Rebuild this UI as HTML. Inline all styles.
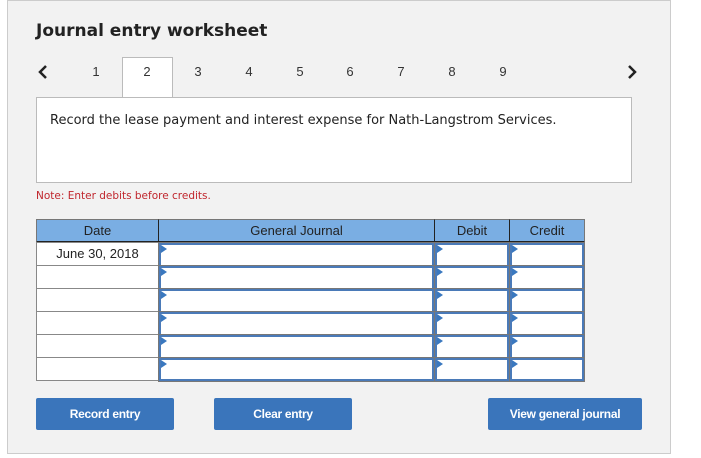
<!DOCTYPE html>
<html><head><meta charset="utf-8"><style>
*{margin:0;padding:0;box-sizing:border-box}
body{width:701px;height:458px;background:#fff;position:relative;overflow:hidden;font-family:"Liberation Sans",Arial,sans-serif}
.a{position:absolute}
.panel{left:7px;top:0;width:664px;height:454px;background:#f2f2f2;border:1px solid #ccc}
.title{left:36px;top:21px;font:bold 17px "DejaVu Sans",Verdana,sans-serif;color:#222}
.num{top:64px;width:20px;margin-left:-10px;text-align:center;font-size:13px;color:#333}
.tab{left:122px;top:57px;width:51px;height:41px;background:#fff;border:1px solid #bbb;border-bottom:none}
.box{left:36px;top:97px;width:596px;height:86px;background:#fff;border:1px solid #bbb}
.box span{position:absolute;left:13px;top:15px;font:13px "DejaVu Sans",Verdana,sans-serif;color:#222;white-space:nowrap}
.note{left:36px;top:190px;font:10.5px "DejaVu Sans",Verdana,sans-serif;color:#c0262d}
.hd{top:219px;height:24px;background:#7aaee3;border:1px solid #777;border-bottom:2px solid #222;font-size:13px;color:#222;text-align:center;line-height:21px}
.dc{left:36px;width:123px;height:24px;background:#fff;border:1px solid #888;font-size:13px;color:#222;text-align:center;line-height:22px}
.in{height:24px;background:#fff;border:2px solid #4a7ab8;outline:1px solid #777}
.in:before{content:"";position:absolute;left:0;top:0;border-left:6px solid #3a78bf;border-top:4px solid transparent;border-bottom:4px solid transparent}
.btn{top:398px;height:32px;background:#3a75bb;color:#fff;font-weight:bold;font-size:12px;text-align:center;line-height:32px;border-radius:2px;letter-spacing:-0.3px}
</style></head><body>
<div class="a panel"></div>
<div class="a title">Journal entry worksheet</div>
<div class="a tab"></div>
<svg class="a" style="left:37px;top:64px" width="12" height="16"><path d="M9 2 L3 8 L9 14" fill="none" stroke="#222" stroke-width="2.5"/></svg>
<svg class="a" style="left:626px;top:64px" width="12" height="16"><path d="M3 2 L9 8 L3 14" fill="none" stroke="#222" stroke-width="2.5"/></svg>
<div class="a num" style="left:96px">1</div>
<div class="a num" style="left:147px">2</div>
<div class="a num" style="left:198px">3</div>
<div class="a num" style="left:249px">4</div>
<div class="a num" style="left:300px">5</div>
<div class="a num" style="left:350px">6</div>
<div class="a num" style="left:401px">7</div>
<div class="a num" style="left:452px">8</div>
<div class="a num" style="left:503px">9</div>
<div class="a box"><span>Record the lease payment and interest expense for Nath-Langstrom Services.</span></div>
<div class="a note">Note: Enter debits before credits.</div>
<div class="a hd" style="left:36px;width:123px">Date</div>
<div class="a hd" style="left:158px;width:277px;border-left-color:#222">General Journal</div>
<div class="a hd" style="left:434px;width:76px;border-left-color:#222">Debit</div>
<div class="a hd" style="left:509px;width:76px;border-left-color:#222">Credit</div>

<div class="a dc" style="top:242px">June 30, 2018</div>
<div class="a dc" style="top:265px"></div>
<div class="a dc" style="top:288px"></div>
<div class="a dc" style="top:311px"></div>
<div class="a dc" style="top:334px"></div>
<div class="a dc" style="top:357px"></div>

<div class="a in" style="left:159px;top:243px;width:275px"></div>
<div class="a in" style="left:435px;top:243px;width:74px"></div>
<div class="a in" style="left:510px;top:243px;width:74px"></div>
<div class="a in" style="left:159px;top:266px;width:275px"></div>
<div class="a in" style="left:435px;top:266px;width:74px"></div>
<div class="a in" style="left:510px;top:266px;width:74px"></div>
<div class="a in" style="left:159px;top:289px;width:275px"></div>
<div class="a in" style="left:435px;top:289px;width:74px"></div>
<div class="a in" style="left:510px;top:289px;width:74px"></div>
<div class="a in" style="left:159px;top:312px;width:275px"></div>
<div class="a in" style="left:435px;top:312px;width:74px"></div>
<div class="a in" style="left:510px;top:312px;width:74px"></div>
<div class="a in" style="left:159px;top:335px;width:275px"></div>
<div class="a in" style="left:435px;top:335px;width:74px"></div>
<div class="a in" style="left:510px;top:335px;width:74px"></div>
<div class="a in" style="left:159px;top:358px;width:275px;height:23px"></div>
<div class="a in" style="left:435px;top:358px;width:74px;height:23px"></div>
<div class="a in" style="left:510px;top:358px;width:74px;height:23px"></div>

<div class="a btn" style="left:36px;width:138px">Record entry</div>
<div class="a btn" style="left:214px;width:138px">Clear entry</div>
<div class="a btn" style="left:488px;width:154px">View general journal</div>
</body></html>
